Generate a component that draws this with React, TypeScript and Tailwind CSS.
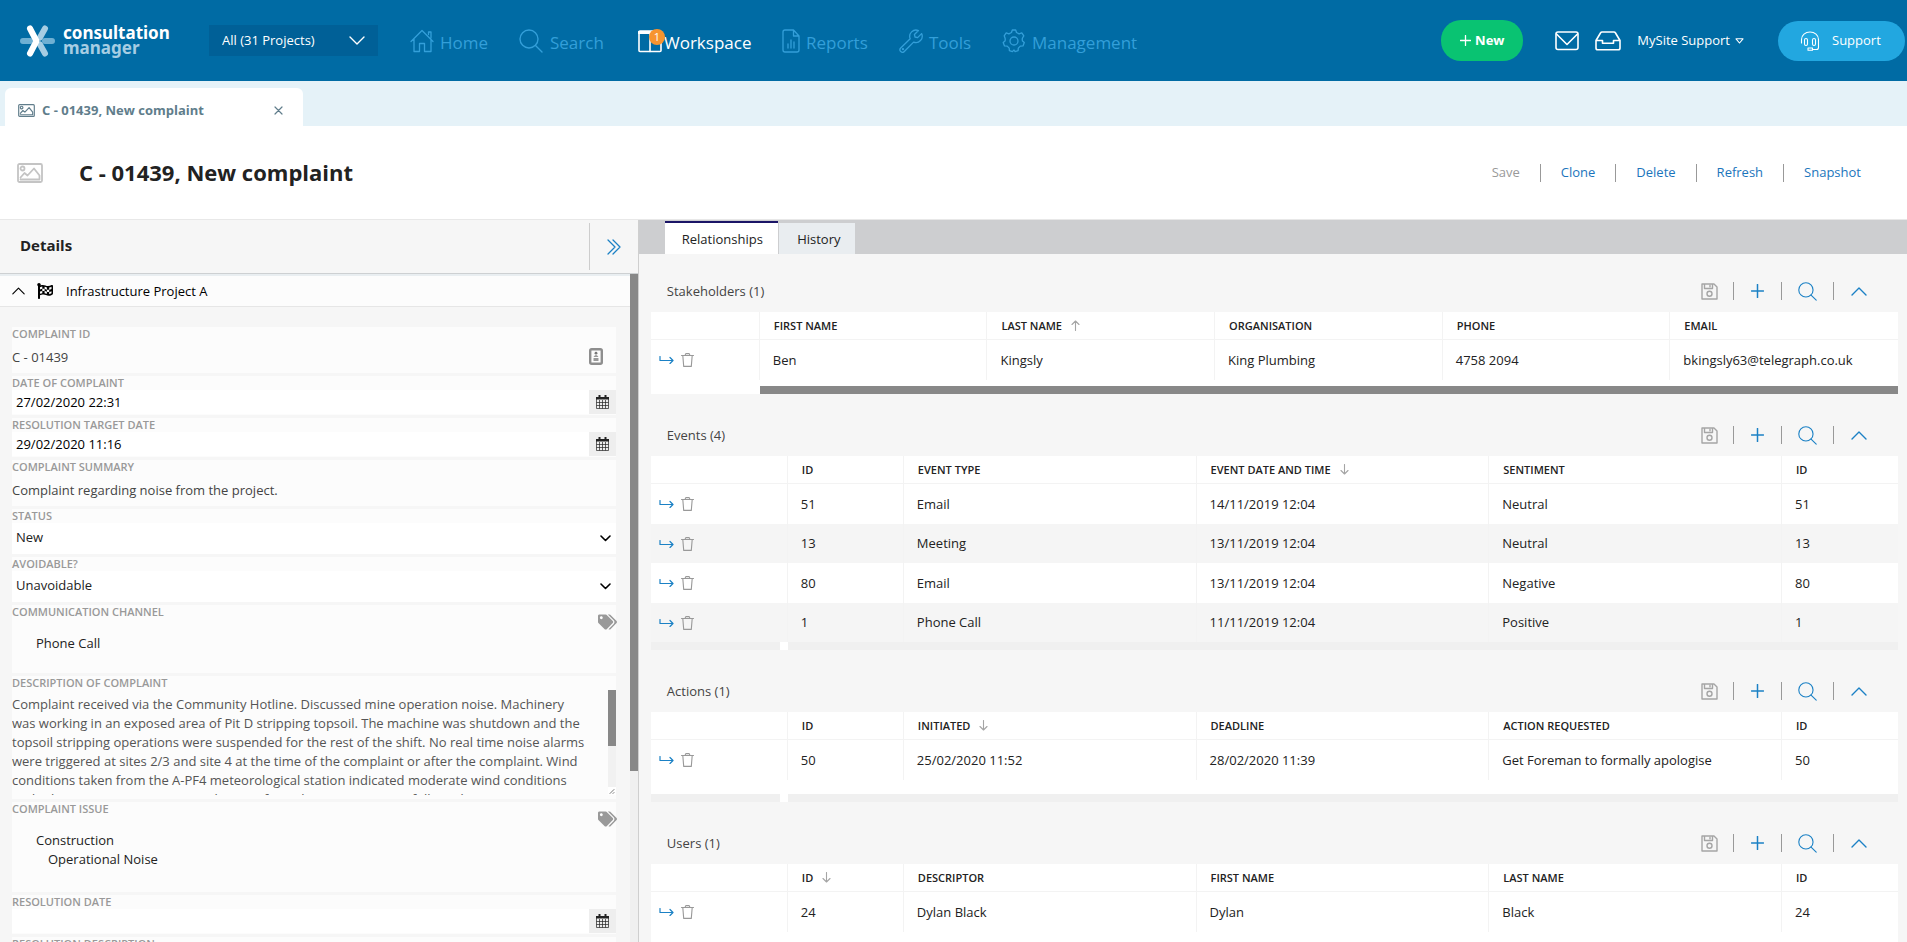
import React from 'react';
import { FaFlagCheckered, FaTags } from 'react-icons/fa';
import { clsx } from 'clsx';

interface IconProps {
    className?: string;
}

interface Column {
    label: string;
    sort?: 'asc' | 'desc';
    width?: string;
}

interface RelationProps {
    title: string;
    columns: Column[];
    rows: string[][];
    actionWidth: string;
    first?: boolean;
    children?: React.ReactNode;
}

const DESCRIPTION = [
    'Complaint received via the Community Hotline. Discussed mine operation noise. Machinery',
    'was working in an exposed area of Pit D stripping topsoil. The machine was shutdown and the',
    'topsoil stripping operations were suspended for the rest of the shift. No real time noise alarms',
    'were triggered at sites 2/3 and site 4 at the time of the complaint or after the complaint. Wind',
    'conditions taken from the A-PF4 meteorological station indicated moderate wind conditions',
    'and other site measurements at the time from the monitors were followed up.',
].join('\n');

/* Icons */
const Svg: React.FC<IconProps & { box: string; width?: number; children: React.ReactNode }> = ({ className, box, width = 1, children }) => (
    <svg className={className} viewBox={box} fill="none" stroke="currentColor" strokeWidth={width} strokeLinecap="round" strokeLinejoin="round" aria-hidden="true">
        {children}
    </svg>
);

const Logo = () => (
    <svg className="w-[35px] h-8 shrink-0" viewBox="0 0 35 32" fill="none" strokeLinecap="round" aria-hidden="true">
        <path d="M3 16h7M25 16h7" stroke="#6fb0d3" strokeWidth="6" />
        <path d="M25 3.500l-5 9M25 28.500l-5-9" stroke="#a6cde3" strokeWidth="6" />
        <path d="M10 3.500l6.500 12.500L10 28.500" stroke="#fff" strokeWidth="6" strokeLinejoin="round" />
    </svg>
);

const HomeIcon = ({ className }: IconProps) => (
    <Svg className={className} box="0 0 24 24" width={1.3}>
        <path d="M1 12.500L12 1.500l11 11M18.500 5.500V3h2.500v5.500M4 10v12.500h5.500v-8h5v8H21V10" />
    </Svg>
);

const SearchIcon = ({ className }: IconProps) => (
    <Svg className={className} box="0 0 24 24" width={1.4}>
        <circle cx="10" cy="10" r="9" />
        <path d="M16.500 16.500L23 23" />
    </Svg>
);

const WorkspaceIcon = ({ className }: IconProps) => (
    <Svg className={className} box="0 0 24 24" width={1.6}>
        <rect x="1" y="2" width="22" height="20.500" rx="1" />
        <path d="M1 3.500h22" strokeWidth="3" />
        <path d="M12 3v19.500" />
    </Svg>
);

const ReportsIcon = ({ className }: IconProps) => (
    <Svg className={className} box="0 0 18 24" width={1.3}>
        <path d="M11.500 1H3a2 2 0 0 0-2 2v18a2 2 0 0 0 2 2h12a2 2 0 0 0 2-2V7zM11.500 1v6H17M6 19v-4M9 19v-8M12 19v-6" />
    </Svg>
);

const ToolsIcon = ({ className }: IconProps) => (
    <Svg className={className} box="0 0 24 24" width={1.3}>
        <path d="M19.500 1.600a6.300 6.300 0 0 0-8.300 8.200L1.700 19a2.500 2.500 0 0 0 3.600 3.500l9.300-9.400a6.300 6.300 0 0 0 8-8.500l-4 4-2.600-.600-.600-2.600z" />
        <circle cx="4" cy="20.200" r=".5" />
    </Svg>
);

const GearIcon = ({ className }: IconProps) => (
    <Svg className={className} box="0 0 24 24" width={1.3}>
        <circle cx="12" cy="12" r="4" />
        <path d="M9.500 3.500L10.300 1h3.400l.8 2.500 2.600 1.300 2.700-1 2 3-1.300 2.200q-.500 1.500 0 3l1.800 1.500-1.300 3.400-2.700.200-2 2-.200 2.500-3 1L12 21l-1.600 1.600-3-1-.200-2.500-2-2-2.700-.200L1.200 13.500 3 12q.500-1.500 0-3L2.200 6.800l2-3 2.700 1z" />
    </Svg>
);

const PictureIcon = ({ className }: IconProps) => (
    <Svg className={className} box="0 0 26 20" width={1.8}>
        <rect x="1" y="1" width="24" height="18" rx="1.500" />
        <circle cx="5.500" cy="5.500" r="2" />
        <path d="M3.500 14.500l4-4.500 3 2.500L17 5.500l5.500 7v4h-19" />
    </Svg>
);

const Chevron = ({ className }: IconProps) => (
    <Svg className={className} box="0 0 16 9" width={1.4}>
        <path d="M1 8l7-7 7 7" />
    </Svg>
);

const Mail = () => (
    <Svg className="w-6 h-5" box="0 0 24 20" width={1.6}>
        <rect x="1" y="1" width="22" height="17.500" rx="2" />
        <path d="M1.500 3L12 13.500 22.500 3" />
    </Svg>
);

const Inbox = () => (
    <Svg className="w-[26px] h-5" box="0 0 26 20" width={1.6}>
        <path d="M1 9.500L5.500 2q.500-1 1.600-1h11.800q1.100 0 1.600 1L25 9.500V17a1.800 1.800 0 0 1-1.800 1.800H2.800A1.800 1.800 0 0 1 1 17zM1 9.500h6.500v2.700h11V9.500H25" />
    </Svg>
);

const Headset = () => (
    <Svg className="w-5 h-5" box="0 0 20 20" width={1.1}>
        <path d="M1.500 12V8.500a8.500 7.500 0 0 1 17 0v8q0 2-2 2H13M8 17h4.500v2.200H8z" />
        <rect x="4.500" y="7.500" width="3" height="7" rx="1.500" />
        <rect x="12.500" y="7.500" width="3" height="7" rx="1.500" />
    </Svg>
);

const Calendar = () => (
    <svg className="w-[13px] h-[14px]" viewBox="0 0 13 14" fill="none" stroke="#222" aria-hidden="true">
        <path d="M0 2h13v2.500H0z" fill="#222" stroke="none" />
        <path d="M3.500 0v3M9.500 0v3" strokeWidth="2" />
        <path d="M.5 4v9.500h12V4M3.500 5v8.500M6.500 5v8.500M9.500 5v8.500M.5 7.500h12M.5 10.500h12" strokeWidth=".7" />
    </svg>
);

const IdCard = () => (
    <svg className="w-[14px] h-[17px]" viewBox="0 0 14 17" fill="none" aria-hidden="true">
        <rect x="1.200" y="1.200" width="11.600" height="14.600" rx="1.500" stroke="#8e8e8e" strokeWidth="2.400" />
        <circle cx="7" cy="5.200" r="1.400" fill="#777" />
        <path d="M4.500 9q2.500-4 5 0zM4.500 10h5v3h-5z" fill="#999" />
    </svg>
);

const SaveIcon = () => (
    <Svg className="w-[17px] h-[17px]" box="0 0 17 17" width={1.4}>
        <path d="M1 1h12l3 3v12H1zM3.500 1v4.500h8V1M9 2.500v1.200" />
        <circle cx="8.500" cy="10.800" r="2.500" />
    </Svg>
);

const SortArrow = ({ dir }: { dir: 'asc' | 'desc' }) => (
    <Svg className={clsx('w-[9px] h-[11px] text-[#a5a5a5]', dir === 'desc' && 'rotate-180')} box="0 0 9 11" width={1.1}>
        <path d="M4.500 10.500V1M1 4.500L4.500 1 8 4.500" />
    </Svg>
);

const OpenIcon = () => (
    <Svg className="w-[15px] h-2" box="0 0 15 8" width={1.2}>
        <path d="M1 .5v4h13M11 1.500l3 3-3 3" />
    </Svg>
);

const TrashIcon = () => (
    <Svg className="w-[13px] h-[14px]" box="0 0 13 14" width={1.1}>
        <path d="M.5 2.500h12M4 2.500L4.800.6h3.400L9 2.500M1.800 2.500l.9 10.900h7.600l.9-10.900" />
    </Svg>
);

/* Top navigation */
const navItems = [
    { label: 'Home', icon: HomeIcon, size: 'w-6 h-6', link: 'w-[109px] gap-[6px]' },
    { label: 'Search', icon: SearchIcon, size: 'w-6 h-6', link: 'w-[119px] gap-[7px]' },
    { label: 'Workspace', icon: WorkspaceIcon, size: 'w-6 h-6', link: 'w-[144px] gap-[2px]' },
    { label: 'Reports', icon: ReportsIcon, size: 'w-[18px] h-6', link: 'w-[117px] gap-[6px]' },
    { label: 'Tools', icon: ToolsIcon, size: 'w-6 h-6', link: 'w-[103px] gap-[6px]' },
    { label: 'Management', icon: GearIcon, size: 'w-6 h-6', link: 'gap-[6px]' },
];

const Header = () => (
    <header className="flex items-center h-[81px] shrink-0 bg-[#006ba4] pl-5 pr-[2px] text-[13px] text-white">
        <Logo />
        <div className="w-[145px] pl-2 pb-[2px] font-['Noto_Sans'] text-[17px] leading-[15px] font-bold">
            <div>consultation</div>
            <div className="text-[#a6cde3]">manager</div>
        </div>
        <div className="relative ml-[9px] w-[169px]">
            <select aria-label="Project" className="appearance-none w-full h-[31px] pl-[13px] bg-[#006097] text-white">
                <option>All (31 Projects)</option>
            </select>
            <Chevron className="absolute right-[13px] top-[11px] w-4 h-[9px] rotate-180 pointer-events-none" />
        </div>
        <nav className="flex items-center ml-8 text-[17px]">
            {navItems.map(({ label, icon: Icon, size, link }) => (
                <a
                    key={label}
                    href="#"
                    className={clsx('relative flex items-center shrink-0', link, label === 'Workspace' ? 'text-white' : 'text-[#339fd9]')}
                >
                    <Icon className={clsx('shrink-0', size)} />
                    <span className="pt-[3px]">{label}</span>
                    {label === 'Workspace' && (
                        <span className="absolute left-[11px] top-0 w-4 h-4 rounded-full bg-[#f7942f] text-[11px] leading-4 text-center">1</span>
                    )}
                </a>
            ))}
        </nav>
        <div className="flex items-center ml-auto">
            <button className="flex items-center justify-center gap-1 w-[82px] h-[41px] rounded-[20px] bg-[#09c372] font-bold">
                <Svg className="w-[11px] h-[11px]" box="0 0 11 11" width={1.3}>
                    <path d="M5.500 .5v10M.5 5.500h10" />
                </Svg>
                New
            </button>
            <button aria-label="Messages" className="ml-8"><Mail /></button>
            <button aria-label="Inbox" className="ml-4"><Inbox /></button>
            <button className="flex items-center gap-[5px] ml-4">
                MySite Support
                <Svg className="w-[9px] h-[6px]" box="0 0 9 6" width={1.1}>
                    <path d="M1 .8h7L4.500 5z" />
                </Svg>
            </button>
            <button className="flex items-center gap-3 ml-[34px] pl-[22px] w-[127px] h-10 rounded-[20px] bg-[#22a7e0]">
                <Headset />
                Support
            </button>
        </div>
    </header>
);

/* Details form */
const Block: React.FC<{ label: string; id?: string; height: string; children?: React.ReactNode }> = ({ label, id, height, children }) => (
    <div className={clsx('relative shrink-0 bg-[#fcfcfc]', height)}>
        <label htmlFor={id} className="block h-[14px] text-[11px] leading-[14px] font-semibold text-[#999]">{label}</label>
        {children}
    </div>
);

const DateField = ({ label, id, value }: { label: string; id: string; value: string }) => (
    <Block label={label} id={id} height="h-[39px]">
        <div className="flex h-6">
            <input id={id} type="text" defaultValue={value} className="flex-1 min-w-0 pl-1 bg-white text-black" />
            <button aria-label={`Pick ${label.toLowerCase()}`} className="flex items-center justify-center w-[27px] bg-[#eee]">
                <Calendar />
            </button>
        </div>
    </Block>
);

const SelectField = ({ label, id, value }: { label: string; id: string; value: string }) => (
    <Block label={label} id={id} height="h-[45px]">
        <select id={id} className="appearance-none w-full h-[31px] pl-1 pb-[2px] bg-white text-[#222]">
            <option>{value}</option>
        </select>
        <Svg className="absolute right-[5px] top-[26px] w-[11px] h-[7px] text-black pointer-events-none" box="0 0 11 7" width={1.6}>
            <path d="M1 1l4.500 4.500L10 1" />
        </Svg>
    </Block>
);

const TagsButton = () => (
    <button aria-label="Edit tags" className="absolute -right-px top-[9px] text-[#999]">
        <FaTags className="w-[19px] h-4" />
    </button>
);

const DetailsPanel = () => (
    <section className="flex flex-col w-[33.5%] shrink-0 border-r border-[#cfcfcf]">
        <div className="flex items-center h-[54px] shrink-0 pl-5 border-b border-[#cdd0d2]">
            <h2 className="pb-[2px] text-[15px] font-bold text-[#222]">Details</h2>
            <button aria-label="Expand details" className="flex items-center justify-center ml-auto w-[49px] h-[47px] border-l border-[#cdcdcd] text-[#1b81c5]">
                <Svg className="w-[14px] h-4" box="0 0 14 16" width={1.3}>
                    <path d="M1 1l7 7-7 7M6 1l7 7-7 7" />
                </Svg>
            </button>
        </div>
        <div className="flex flex-1 min-h-0">
            <div className="flex flex-col flex-1 min-w-0 min-h-0 overflow-hidden">
                <div className="flex items-center h-[33px] shrink-0 pl-3 border-t-2 border-t-[#e9eef1] border-b border-b-[#e6e6e6] bg-[#fcfcfc] text-black">
                    <button aria-label="Collapse project"><Chevron className="w-[13px] h-2" /></button>
                    <FaFlagCheckered className="w-4 h-4 ml-3" />
                    <span className="ml-[13px]">Infrastructure Project A</span>
                </div>
                <form className="flex flex-col gap-[3px] pt-5 pl-3 pr-[14px] text-[#444]">
                    <Block label="COMPLAINT ID" height="h-[46px]">
                        <p className="pt-[7px]">C - 01439</p>
                        <span className="absolute right-[13px] top-[21px]"><IdCard /></span>
                    </Block>
                    <DateField label="DATE OF COMPLAINT" id="complaint-date" value="27/02/2020 22:31" />
                    <DateField label="RESOLUTION TARGET DATE" id="target-date" value="29/02/2020 11:16" />
                    <Block label="COMPLAINT SUMMARY" height="h-[46px]">
                        <p className="pt-[7px]">Complaint regarding noise from the project.</p>
                    </Block>
                    <SelectField label="STATUS" id="status" value="New" />
                    <SelectField label="AVOIDABLE?" id="avoidable" value="Unavoidable" />
                    <Block label="COMMUNICATION CHANNEL" height="h-[68px]">
                        <TagsButton />
                        <p className="pl-6 pt-[15px] text-[#222]">Phone Call</p>
                    </Block>
                    <Block label="DESCRIPTION OF COMPLAINT" id="description" height="h-[123px]">
                        <div className="flex h-[105px]">
                            <textarea
                                id="description"
                                defaultValue={DESCRIPTION}
                                className="flex-1 min-w-0 pt-[5px] leading-[19px] text-[#555] resize-none overflow-hidden"
                            />
                            <div className="flex flex-col w-2 bg-[#f1f1f1]">
                                <div className="h-14 bg-[#888]" />
                                <Svg className="mt-auto w-2 h-2 bg-white text-[#777]" box="0 0 8 8">
                                    <path d="M2 6.500l4-4M5 6.500l1-1" />
                                </Svg>
                            </div>
                        </div>
                    </Block>
                    <Block label="COMPLAINT ISSUE" height="h-[90px]">
                        <TagsButton />
                        <p className="pl-6 pt-[15px] text-[#222]">Construction</p>
                        <p className="pl-9 text-[#222]">Operational Noise</p>
                    </Block>
                    <DateField label="RESOLUTION DATE" id="resolution-date" value="" />
                    <Block label="RESOLUTION DESCRIPTION" height="h-[46px]" />
                </form>
            </div>
            <div className="w-2 shrink-0 bg-[#f0f0f0]">
                <div className="h-[497px] bg-[#888]" />
            </div>
        </div>
    </section>
);

/* Related records */
const Separator = () => <span className="w-px h-[18px] bg-[#999]" />;

const RelationTable: React.FC<RelationProps> = ({ title, columns, rows, actionWidth, first, children }) => (
    <section className={first ? 'pt-[17px]' : 'pt-[21px]'}>
        <div className="flex items-center h-10 mb-px pl-4 pr-[31px]">
            <h3 className="text-[#444]">{title}</h3>
            <div className="flex items-center ml-auto text-[#1b81c5]">
                <button aria-label={`Save ${title}`} disabled className="mr-[15px] text-[#a5a5a5]"><SaveIcon /></button>
                <Separator />
                <button aria-label={`Add ${title}`} className="mx-[17px]">
                    <Svg className="w-[13px] h-[14px]" box="0 0 13 14" width={1.5}>
                        <path d="M6.500 .5v13M.5 7h12" />
                    </Svg>
                </button>
                <Separator />
                <button aria-label={`Search ${title}`} className="mx-4"><SearchIcon className="w-[19px] h-[19px]" /></button>
                <Separator />
                <button aria-label={`Collapse ${title}`} className="ml-[17px]"><Chevron className="w-4 h-[9px]" /></button>
            </div>
        </div>
        <div className="bg-white">
            <table className="w-full table-fixed border-separate border-spacing-0 text-left text-[#222]">
                <thead>
                    <tr className="h-7">
                        <td className={clsx('border-b border-r border-[#f3f3f3]', actionWidth)} />
                        {columns.map((column, i) => (
                            <th key={i} className={clsx('border-b border-[#f3f3f3] pl-[14px] text-[11px] leading-4 font-semibold', i < columns.length - 1 && 'border-r', column.width)}>
                                <span className="flex items-center gap-[9px]">
                                    {column.label}
                                    {column.sort && <SortArrow dir={column.sort} />}
                                </span>
                            </th>
                        ))}
                    </tr>
                </thead>
                <tbody>
                    {rows.map((row, r) => (
                        <tr key={r} className={clsx(r % 2 === 1 ? 'h-[39px] bg-[#f5f5f5]' : 'h-10')}>
                            <td className="border-r border-[#f3f3f3] pl-2">
                                <span className="flex items-center gap-[7px]">
                                    <button aria-label="Open" className="text-[#1b81c5]"><OpenIcon /></button>
                                    <button aria-label="Delete" className="text-[#999]"><TrashIcon /></button>
                                </span>
                            </td>
                            {row.map((cell, i) => (
                                <td key={i} className={clsx('border-[#f3f3f3] pl-[13px]', i < row.length - 1 && 'border-r')}>{cell}</td>
                            ))}
                        </tr>
                    ))}
                </tbody>
            </table>
            {children}
        </div>
    </section>
);

const IdleScroll = () => (
    <div className="flex h-2">
        <div className="w-[129px] bg-[#f0f0f0]" />
        <div className="flex-1 ml-2 bg-[#f0f0f0]" />
    </div>
);

const RelationsPanel = () => (
    <section className="flex flex-col flex-1 min-w-0">
        <div role="tablist" className="flex items-end h-[34px] shrink-0 pl-[26px] bg-[#cdced0] text-[#222]">
            <button role="tab" aria-selected="true" className="h-[33px] w-[113px] pl-[2px] pt-px border-t-2 border-[#1a1466] bg-white">Relationships</button>
            <button role="tab" aria-selected="false" className="ml-px h-[31px] w-[76px] pl-1 pt-px bg-[#e9edf0]">History</button>
        </div>
        <div className="flex-1 min-h-0 overflow-hidden pl-3 pr-[9px]">
            <RelationTable
                first
                title="Stakeholders (1)"
                actionWidth="w-[109px]"
                columns={[{ label: 'FIRST NAME' }, { label: 'LAST NAME', sort: 'asc' }, { label: 'ORGANISATION' }, { label: 'PHONE' }, { label: 'EMAIL' }]}
                rows={[['Ben', 'Kingsly', 'King Plumbing', '4758 2094', 'bkingsly63@telegraph.co.uk']]}
            >
                <div className="mt-[6px] ml-[109px] h-2 bg-[#888]" />
            </RelationTable>
            <RelationTable
                title="Events (4)"
                actionWidth="w-[137px]"
                columns={[
                    { label: 'ID', width: 'w-[116px]' },
                    { label: 'EVENT TYPE' },
                    { label: 'EVENT DATE AND TIME', sort: 'desc' },
                    { label: 'SENTIMENT' },
                    { label: 'ID', width: 'w-[116px]' },
                ]}
                rows={[
                    ['51', 'Email', '14/11/2019 12:04', 'Neutral', '51'],
                    ['13', 'Meeting', '13/11/2019 12:04', 'Neutral', '13'],
                    ['80', 'Email', '13/11/2019 12:04', 'Negative', '80'],
                    ['1', 'Phone Call', '11/11/2019 12:04', 'Positive', '1'],
                ]}
            >
                <IdleScroll />
            </RelationTable>
            <RelationTable
                title="Actions (1)"
                actionWidth="w-[137px]"
                columns={[
                    { label: 'ID', width: 'w-[116px]' },
                    { label: 'INITIATED', sort: 'desc' },
                    { label: 'DEADLINE' },
                    { label: 'ACTION REQUESTED' },
                    { label: 'ID', width: 'w-[116px]' },
                ]}
                rows={[['50', '25/02/2020 11:52', '28/02/2020 11:39', 'Get Foreman to formally apologise', '50']]}
            >
                <div className="h-[14px]" />
                <IdleScroll />
            </RelationTable>
            <RelationTable
                title="Users (1)"
                actionWidth="w-[137px]"
                columns={[
                    { label: 'ID', sort: 'desc', width: 'w-[116px]' },
                    { label: 'DESCRIPTOR' },
                    { label: 'FIRST NAME' },
                    { label: 'LAST NAME' },
                    { label: 'ID', width: 'w-[116px]' },
                ]}
                rows={[['24', 'Dylan Black', 'Dylan', 'Black', '24']]}
            >
                <div className="h-[14px]" />
            </RelationTable>
        </div>
    </section>
);

const actions = ['Save', 'Clone', 'Delete', 'Refresh', 'Snapshot'];

const App = () => (
    <div className="flex flex-col h-screen overflow-hidden bg-[#f6f6f6] font-['Open_Sans','Noto_Sans',sans-serif] text-[13px] leading-[19px]">
        <Header />

        {/* Open records */}
        <div className="flex items-end h-[45px] shrink-0 pl-[5px] bg-[#e5f2f8]">
            <div className="flex items-center w-[298px] h-[38px] pl-[13px] pr-5 pt-2 pb-[2px] rounded-t-md bg-white text-[#607d8b]">
                <PictureIcon className="w-[17px] h-[13px]" />
                <span className="ml-[7px] font-bold">C - 01439, New complaint</span>
                <button aria-label="Close tab" className="ml-auto">
                    <Svg className="w-[9px] h-[9px]" box="0 0 9 9" width={1.2}>
                        <path d="M1 1l7 7M8 1L1 8" />
                    </Svg>
                </button>
            </div>
        </div>

        {/* Record title */}
        <div className="flex items-center h-[94px] shrink-0 pl-[17px] pr-[26px] border-b border-[#e8e8e8] bg-white">
            <PictureIcon className="w-[26px] h-5 text-[#c4c4c4]" />
            <h1 className="ml-9 pb-[2px] text-[22px] leading-7 font-bold text-[#222]">C - 01439, New complaint</h1>
            <div className="flex items-center ml-auto">
                {actions.map((action, i) => (
                    <React.Fragment key={action}>
                        {i > 0 && <Separator />}
                        <button disabled={i === 0} className={clsx('px-5', i === 0 ? 'text-[#999]' : 'text-[#1b75bc]')}>{action}</button>
                    </React.Fragment>
                ))}
            </div>
        </div>

        <main className="flex flex-1 min-h-0">
            <DetailsPanel />
            <RelationsPanel />
        </main>
    </div>
);

export default App;
